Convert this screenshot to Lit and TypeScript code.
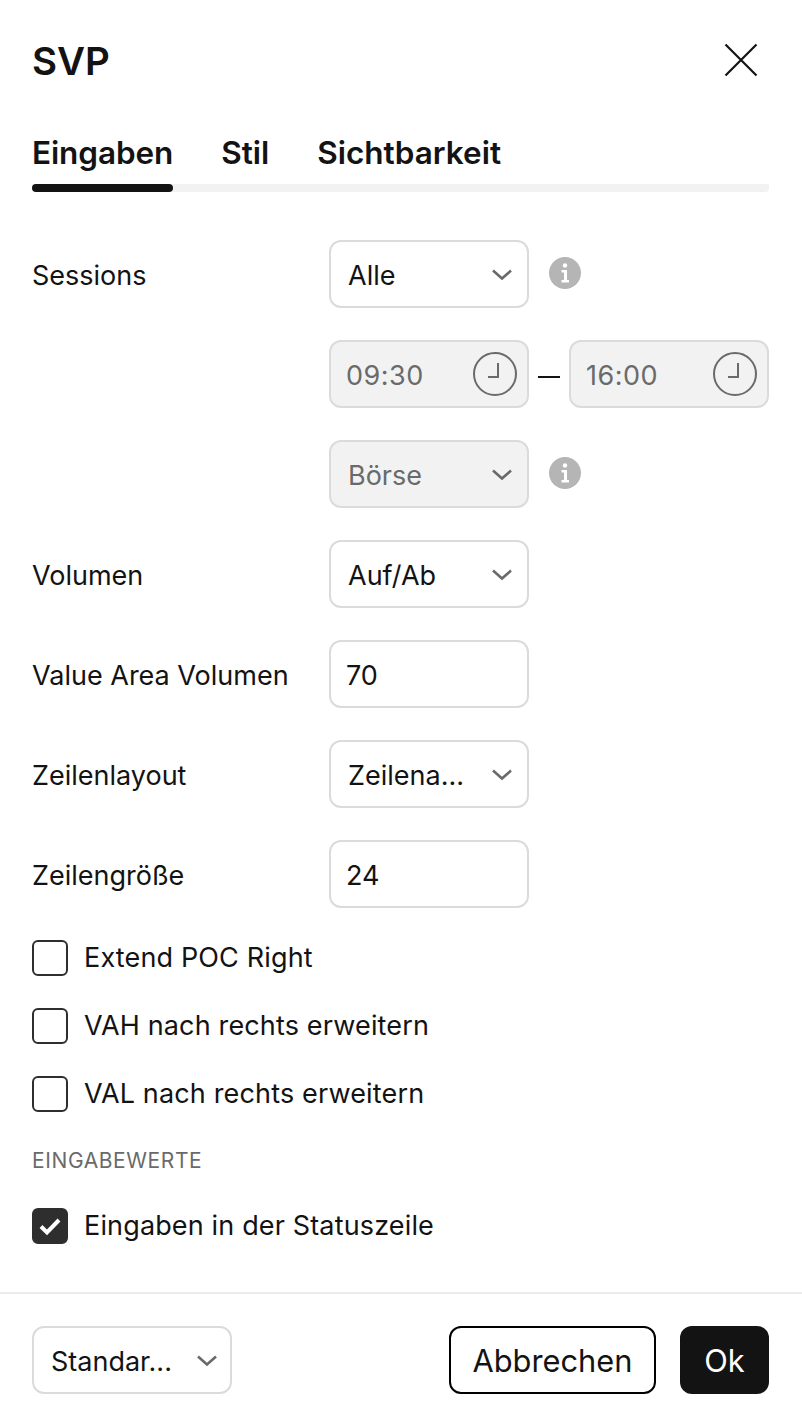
import { LitElement, html, css, svg } from 'lit';
import { customElement } from 'lit/decorators.js';

const chevron = html`<svg class="chevron" width="24" height="14" viewBox="0 0 24 14" fill="none">
  <path d="M3 3.500 12 11.500 21 3.500" stroke="currentColor" stroke-width="2.600" />
</svg>`;

const info = html`<svg class="info" width="32" height="32" viewBox="0 0 32 32">
  <circle cx="16" cy="16" r="16" fill="#b5b5b5" />
  <circle cx="16" cy="8.500" r="2.200" fill="#fff" />
  <path d="M12.500 13H18V23H20V25.500H12.500V23H15V15.500H12.500Z" fill="#fff" />
</svg>`;

const clock = svg`<circle cx="22" cy="22" r="21" fill="none" stroke="#6a6a6a" stroke-width="2" />
  <path d="M25 11V25H15" fill="none" stroke="#6a6a6a" stroke-width="2" />`;

@customElement('app-root')
export class AppRoot extends LitElement {
  static styles = css`
    :host {
      display: block;
      width: 802px;
      height: 1422px;
      background: #fff;
      color: #131313;
      font-family: Inter, 'Liberation Sans', sans-serif;
      font-size: 27px;
      overflow: hidden;
    }

    .header {
      display: flex;
      justify-content: space-between;
      align-items: center;
      height: 120px;
      padding: 0 33px 0 32px;
    }

    h1 {
      margin: 2px 0 0;
      font-size: 38.500px;
      line-height: 48px;
      font-weight: 600;
    }

    .close {
      display: block;
      margin-right: 11px;
    }

    .tabs {
      display: flex;
      gap: 48px;
      margin: 0 33px 0 32px;
      height: 72px;
      border-radius: 4px;
      background: linear-gradient(#f2f2f2, #f2f2f2) bottom / 100% 8px no-repeat;
      font-size: 31.500px;
      font-weight: 600;
      line-height: 66px;
    }

    .tab {
      position: relative;
    }

    .tab.active {
      letter-spacing: -0.100px;
    }

    .tab.active::after {
      content: '';
      position: absolute;
      left: 0;
      right: 0;
      bottom: 0;
      height: 8px;
      border-radius: 4px;
      background: #131313;
    }

    .form {
      display: grid;
      grid-template-columns: 297px 1fr;
      row-gap: 32px;
      padding: 48px 33px 0 32px;
    }

    .label {
      display: flex;
      align-items: center;
      height: 68px;
      padding-top: 2px;
      box-sizing: border-box;
    }

    .control {
      grid-column: 2;
      display: flex;
      align-items: center;
    }

    .field {
      box-sizing: border-box;
      display: flex;
      align-items: center;
      justify-content: space-between;
      width: 200px;
      height: 68px;
      padding: 0 13px 0 17px;
      border: 2px solid #dbdbdb;
      border-radius: 12px;
      background: #fff;
      white-space: nowrap;
    }

    .field span {
      margin-top: 2px;
    }

    .field.input {
      padding-left: 15px;
    }

    .field.disabled {
      background: #f2f2f2;
      color: #6a6a6a;
    }

    .field.time {
      padding: 0 10px 0 15px;
      letter-spacing: 0.500px;
    }

    .chevron {
      flex: none;
      color: #6a6a6a;
    }

    .footer .field {
      padding-right: 11px;
    }

    .info {
      margin-left: 20px;
      margin-top: -2px;
    }

    .dash {
      display: flex;
      justify-content: center;
      width: 40px;
    }

    .dash i {
      width: 22px;
      height: 2px;
      margin-top: 6px;
      background: #131313;
    }

    .checks {
      display: flex;
      flex-direction: column;
      gap: 32px;
      padding: 32px 33px 0 32px;
    }

    .check {
      display: flex;
      align-items: center;
      gap: 16px;
      height: 36px;
      letter-spacing: 0.150px;
    }

    .check-text {
      margin-bottom: 2px;
    }

    .box {
      box-sizing: border-box;
      flex: none;
      display: flex;
      align-items: center;
      justify-content: center;
      width: 36px;
      height: 36px;
      border: 2px solid #2e2e2e;
      border-radius: 6px;
    }

    .box.on {
      background: #2e2e2e;
    }

    .section {
      font-size: 21px;
      line-height: 24px;
      letter-spacing: 0.600px;
      color: #6a6a6a;
      margin: 5px 0 3px;
    }

    .footer {
      box-sizing: border-box;
      display: flex;
      align-items: flex-start;
      justify-content: space-between;
      margin-top: 48px;
      height: 131px;
      padding: 32px 33px 0 32px;
      border-top: 2px solid #ebebeb;
    }

    .actions {
      display: flex;
      gap: 24px;
    }

    button {
      height: 68px;
      border-radius: 12px;
      font: inherit;
      font-size: 30.800px;
      padding: 1px 0 0;
    }

    .cancel {
      width: 207px;
      border: 2px solid #000;
      background: #fff;
      color: #131313;
    }

    .ok {
      width: 89px;
      border: none;
      background: #131313;
      color: #fff;
    }
  `;

  private _select(value: string, disabled = false) {
    return html`<div class="field ${disabled ? 'disabled' : ''}"><span>${value}</span>${chevron}</div>`;
  }

  private _input(value: string) {
    return html`<div class="field input"><span>${value}</span></div>`;
  }

  private _time(value: string) {
    return html`<div class="field disabled time">
      <span>${value}</span>
      <svg width="44" height="44" viewBox="0 0 44 44">${clock}</svg>
    </div>`;
  }

  private _check(label: string, on = false) {
    return html`<div class="check">
      <span class="box ${on ? 'on' : ''}">
        ${on
          ? html`<svg width="24" height="20" viewBox="0 0 24 20">
              <path d="M3 10.500 9 16.500 21 4" fill="none" stroke="#fff" stroke-width="4" />
            </svg>`
          : ''}
      </span>
      <span class="check-text">${label}</span>
    </div>`;
  }

  render() {
    return html`
      <div class="header">
        <h1>SVP</h1>
        <svg class="close" width="34" height="34" viewBox="0 0 34 34" fill="none">
          <path d="M1.500 1.500 32.500 32.500M32.500 1.500 1.500 32.500" stroke="#131313" stroke-width="2.200" />
        </svg>
      </div>
      <div class="tabs">
        <div class="tab active">Eingaben</div>
        <div class="tab">Stil</div>
        <div class="tab">Sichtbarkeit</div>
      </div>
      <div class="form">
        <div class="label">Sessions</div>
        <div class="control">${this._select('Alle')}${info}</div>
        <div class="control">
          ${this._time('09:30')}
          <span class="dash"><i></i></span>
          ${this._time('16:00')}
        </div>
        <div class="control">${this._select('Börse', true)}${info}</div>
        <div class="label">Volumen</div>
        <div class="control">${this._select('Auf/Ab')}</div>
        <div class="label">Value Area Volumen</div>
        <div class="control">${this._input('70')}</div>
        <div class="label">Zeilenlayout</div>
        <div class="control">${this._select('Zeilena...')}</div>
        <div class="label">Zeilengröße</div>
        <div class="control">${this._input('24')}</div>
      </div>
      <div class="checks">
        ${this._check('Extend POC Right')}
        ${this._check('VAH nach rechts erweitern')}
        ${this._check('VAL nach rechts erweitern')}
        <div class="section">EINGABEWERTE</div>
        ${this._check('Eingaben in der Statuszeile', true)}
      </div>
      <div class="footer">
        ${this._select('Standar...')}
        <div class="actions">
          <button class="cancel">Abbrechen</button>
          <button class="ok">Ok</button>
        </div>
      </div>
    `;
  }
}
